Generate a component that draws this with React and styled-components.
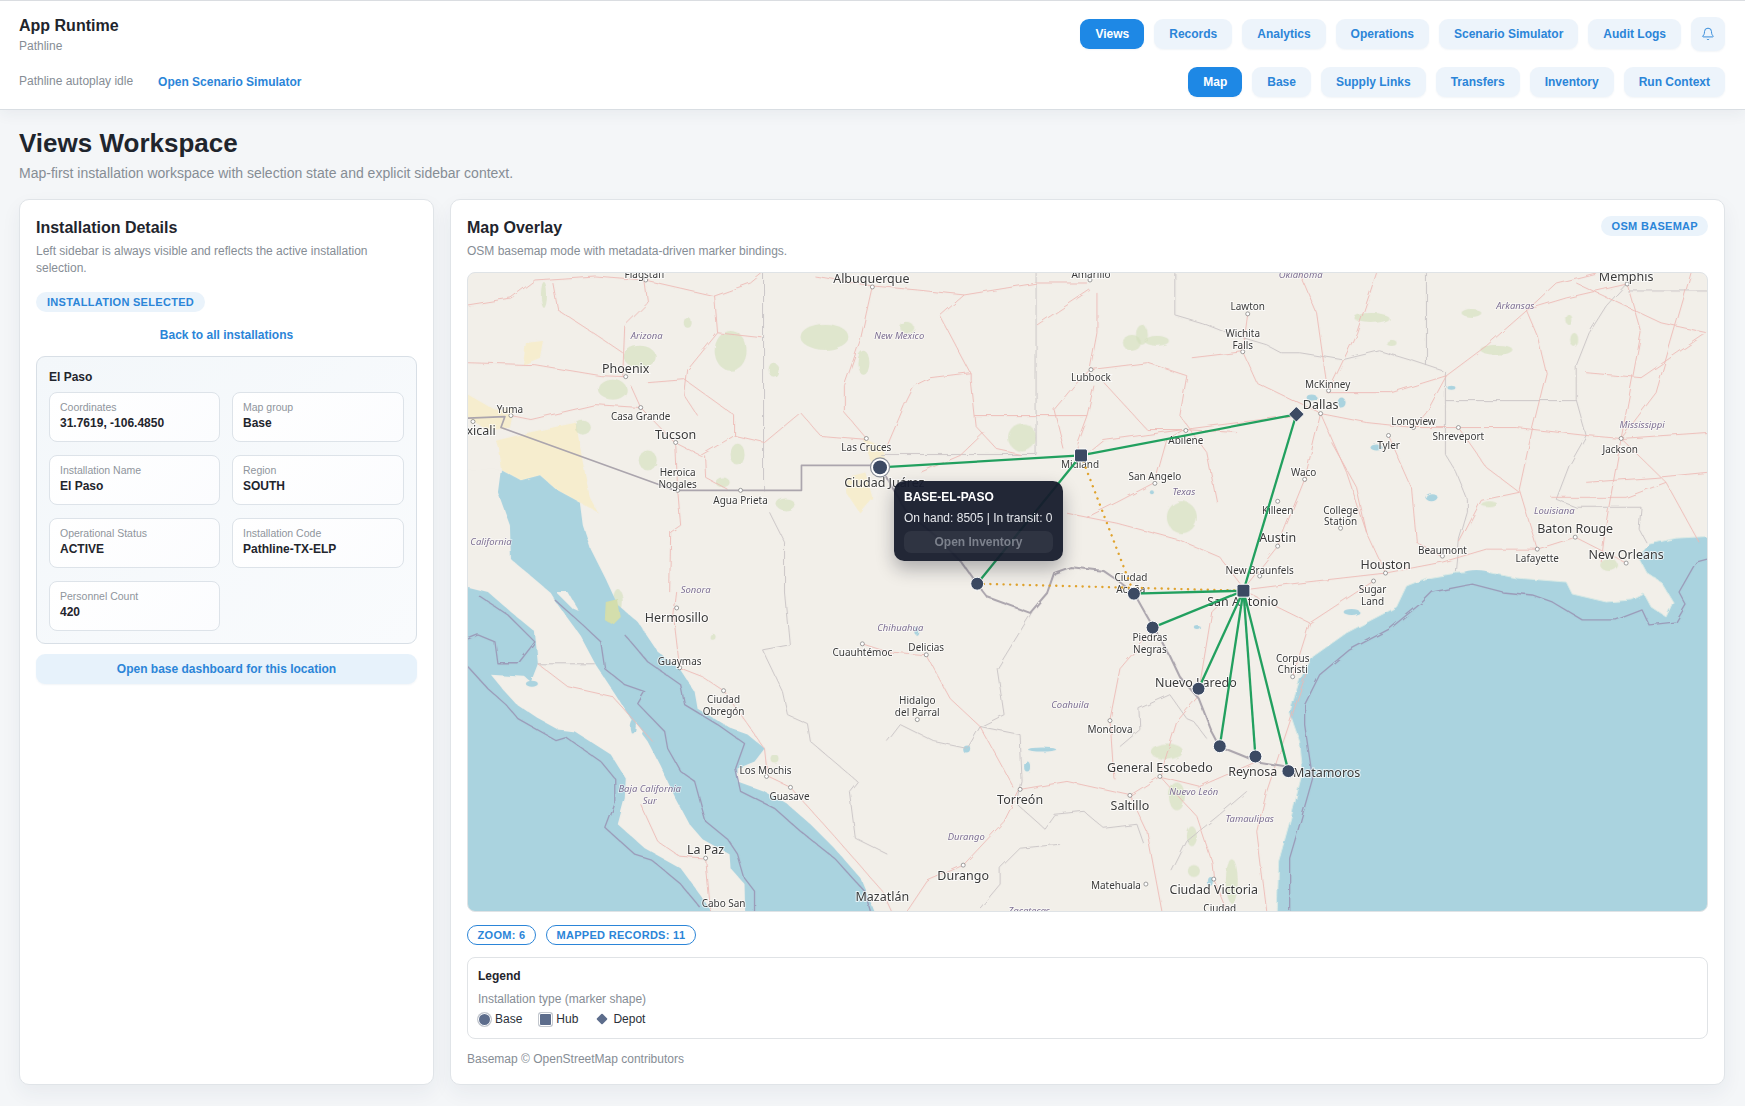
import React from "react";
import styled, { createGlobalStyle } from "styled-components";
import { Bell } from "lucide-react";

const PRIMARY_NAV = ["Views", "Records", "Analytics", "Operations", "Scenario Simulator", "Audit Logs"];
const SUB_NAV = ["Map", "Base", "Supply Links", "Transfers", "Inventory", "Run Context"];
const FIELDS = [
  ["Coordinates", "31.7619, -106.4850"],
  ["Map group", "Base"],
  ["Installation Name", "El Paso"],
  ["Region", "SOUTH"],
  ["Operational Status", "ACTIVE"],
  ["Installation Code", "Pathline-TX-ELP"],
  ["Personnel Count", "420"],
];

const WATER =
  "-20,310 33,197 53,208 72,203 88,217 112,230 115,253 123,277 138,307 150,333 170,350 190,380 212,397 227,420 230,437 263,457 280,463 297,477 287,490 270,497 270,510 297,520 320,533 343,553 367,577 393,607 407,640 415,660 -20,660";
const BAJA =
  "20,320 43,340 67,360 70,392 63,410 57,405 23,403 37,420 48,432 70,447 90,458 107,460 143,483 158,507 157,527 150,553 177,577 213,597 235,627 243,640 250,660 278,660 277,613 263,597 262,583 235,568 222,553 208,527 192,493 180,470 163,447 148,423 128,393 112,363 88,330 82,320 43,287 42,253 30,220 33,197 -20,197 -20,310";
const GULF =
  "1265,263 1210,266 1183,272 1172,285 1180,300 1195,310 1207,330 1200,345 1185,335 1178,322 1166,328 1140,330 1106,322 1100,310 1050,306 1020,300 990,301 960,306 940,314 930,335 880,361 846,385 833,408 823,441 833,470 836,500 826,540 812,590 810,660 1265,660";
const MARITIME = [
  "10,323 40,343 67,370 50,392 30,392 27,370 10,363 0,367",
  "0,395 20,417 38,433 50,447 87,468 97,465 133,490 147,507 147,533 138,557 167,583 183,588 213,613 233,637",
  "87,328 115,353 133,370 137,397 157,413 177,420 170,432 197,460 200,477 213,500 227,510 238,550 260,568 270,583 277,607 287,620 287,640",
  "157,363 180,390 213,413 217,433 250,453 277,472 268,497 273,520 307,537 333,560 367,587 397,620 403,640",
  "823,640 823,587 833,553 846,507 838,453 838,433 853,403 883,378 923,357 956,330 966,320 1006,312 1036,320 1066,323 1086,330 1116,348 1150,348 1176,338 1183,353 1210,350 1220,333 1213,320 1230,290 1241,287",
];
const SAND = [
  "28,168 60,160 108,150 115,190 122,225 130,240 112,230 88,217 72,203 53,208 33,197 30,175",
  "0,122 28,138 46,136 42,155 20,158 0,145",
  "58,70 75,68 72,85 55,92",
  "378,205 398,200 405,225 392,240 380,222",
  "395,165 415,175 420,200 404,190",
];
const PARKS = [
  [76, 22, 3, 13],
  [220, 50, 4, 5],
  [263, 78, 16, 20],
  [145, 117, 14, 10],
  [172, 84, 16, 11],
  [357, 64, 24, 13],
  [306, 97, 5, 7],
  [115, 155, 8, 7],
  [180, 188, 9, 10],
  [270, 182, 7, 11],
  [255, 210, 7, 5],
  [318, 232, 9, 6],
  [396, 90, 6, 12],
  [6, 243, 7, 18],
  [715, 245, 15, 16],
  [555, 165, 14, 14],
  [665, 70, 9, 8],
  [690, 68, 12, 5],
  [675, 62, 6, 10],
  [440, 55, 7, 5],
  [905, 45, 17, 5],
  [925, 70, 5, 3],
  [1030, 77, 16, 5],
  [1005, 40, 10, 4],
  [1108, 67, 4, 7],
  [1103, 47, 3, 5],
  [1023, 232, 8, 3],
  [1143, 293, 9, 6],
  [700, 480, 16, 8],
  [710, 525, 8, 14],
  [725, 565, 5, 10],
  [765, 610, 6, 22],
  [727, 600, 6, 6],
  [150, 330, 5, 13],
  [307, 487, 4, 4],
  [245, 365, 3, 3],
];
const LAKES = [
  [1010, 300, 12, 2],
  [845, 125, 5, 3],
  [875, 130, 4, 5],
  [910, 175, 6, 3],
  [965, 225, 6, 4],
  [985, 115, 4, 2],
  [575, 478, 14, 2],
  [500, 478, 4, 4],
  [885, 340, 8, 3],
  [730, 355, 3, 2],
  [450, 360, 2, 4],
  [560, 495, 3, 5],
  [743, 610, 3, 5],
  [685, 220, 2, 2],
  [64, 412, 6, 3],
  [165, 455, 3, 7],
];
const ROADS = [
  "0,32 43,25 67,7 127,3 177,7 247,23 283,10 295,0",
  "85,10 90,37 130,63 155,80",
  "177,7 180,30 157,53 155,103",
  "0,90 67,92 133,103 157,104",
  "163,113 173,135 207,170",
  "43,143 63,147 127,132 173,135",
  "180,110 217,107 267,143 267,163",
  "207,170 233,183 267,163 297,170 333,140 353,163 400,167",
  "208,170 210,217 213,253 203,260 202,320",
  "237,183 238,205 260,217",
  "247,23 250,60 220,97 217,123 230,143",
  "250,60 295,65",
  "405,13 393,67 377,113 377,140 400,167",
  "347,3 405,13 450,17 497,22 570,10 620,10",
  "497,22 473,43 503,100 503,107 508,153 530,177 553,182",
  "570,52 623,17",
  "630,20 630,60 623,97",
  "623,97 607,113 587,137 597,177",
  "627,113 620,143 610,170 613,183",
  "637,110 680,157 717,157 770,160",
  "623,97 680,90 720,103 713,143 740,180 750,230",
  "620,182 637,168 717,157 826,143",
  "503,100 463,105 447,113 437,133 420,173",
  "507,143 567,143 620,143",
  "517,160 493,183 453,200",
  "600,241 650,251 713,268 753,285 776,315",
  "688,210 650,230 620,245",
  "688,210 700,167 717,157",
  "854,141 838,207 811,274 776,318",
  "854,141 880,200 900,260 919,301",
  "854,141 900,150 947,155 992,155 1050,155 1120,163 1155,166 1241,160",
  "776,318 840,310 919,301",
  "919,301 976,290 1020,277 1071,277 1109,265 1160,291",
  "776,318 843,351 826,405",
  "843,351 907,309",
  "781,41 776,79 790,110 854,141",
  "776,79 725,85",
  "860,111 850,40 833,0",
  "862,118 890,60 910,0",
  "980,103 1020,73 1060,38 1090,10 1130,0",
  "1060,37 1071,63 1080,100 1066,157 1053,217 1071,277",
  "992,155 1020,195 1053,220 1015,228 993,270",
  "1161,11 1100,25 1060,37",
  "980,103 925,120 860,120",
  "980,103 960,140 947,155",
  "922,163 945,215 950,270 976,285",
  "865,170 890,215 900,260",
  "1155,166 1175,60 1161,11",
  "1155,166 1140,250 1135,290",
  "1155,166 1200,210 1233,270",
  "1155,166 1190,120 1225,0",
  "1120,100 1175,105 1241,60",
  "1120,210 1190,205 1241,200",
  "1085,225 1160,225 1200,210",
  "1110,10 1195,50 1241,60",
  "209,320 206,345 212,396 235,405 256,419 278,450 297,477 300,505 323,516 367,565 415,620 424,640",
  "173,533 190,570 212,585 238,587 243,640",
  "70,392 100,415 145,425 185,470",
  "459,383 483,427 513,455 547,517",
  "553,518 600,510 663,524 693,505 733,515 790,490",
  "553,518 537,550 496,594 460,610 440,640",
  "643,448 647,507",
  "643,448 653,397 680,365",
  "693,505 710,450 731,425 745,340 760,325",
  "663,524 680,560 695,640",
  "693,505 730,545 745,590 747,608 760,640",
  "395,372 420,380 459,383",
  "840,400 800,520 790,560 800,640",
];
const STATE_LINES = [
  "296,0 296,218",
  "569,0 569,182 413,182",
  "708,0 708,42 735,50 760,60 800,72 815,80 833,80 876,87 913,78 946,88 976,98",
  "960,0 960,93",
  "979,98 979,182 990,200 1001,227 1001,240 993,267 990,300",
  "979,128 1110,128",
  "1161,10 1140,33 1123,60 1110,93 1110,127 1120,163 1103,193 1090,227 1110,235 1175,235 1173,257 1180,270",
  "1161,18 1241,18",
  "70,392 127,392",
  "302,240 317,270 317,320 322,373 295,378 315,420 320,443 340,452 343,470 390,510 382,520 388,567 420,583",
  "420,470 433,453 467,470 500,477 513,455 553,463 555,510 550,533 577,557 587,543 617,540 637,557 670,553 677,573",
  "565,340 530,397 537,443 513,455",
  "653,475 673,458 672,437 703,423 720,447 727,450 740,467",
  "780,520 753,543 720,570 705,600",
  "593,573 553,577 533,597 533,613 513,637",
];
const LAND_BORDER = "-10,146 37,144 33,155 207,218 334,218 334,193 403,193";
const RIVER_BORDER =
  "413,195 440,240 470,265 495,291 510,312 520,325 563,341 580,321 587,301 603,295 637,299 650,308 667,321 680,344 703,384 713,405 732,427 745,460 753,475 773,483 790,490 820,495";
const CITY_DOTS = [
  [178, 7], [405, 14], [158, 104], [43, 143], [5, 149], [173, 135], [208, 170], [210, 218], [273, 218], [399, 166],
  [209, 336], [212, 396], [256, 419], [299, 505], [323, 516], [238, 587], [395, 372], [459, 383], [450, 448], [643, 449],
  [693, 505], [553, 518], [663, 524], [496, 594], [679, 613], [747, 608], [624, 97], [781, 41], [776, 79], [719, 158],
  [688, 211], [811, 229], [838, 207], [811, 274], [793, 304], [874, 256], [919, 301], [907, 309], [826, 405], [862, 118],
  [854, 141], [947, 155], [922, 163], [992, 155], [1155, 166], [1161, 11], [1109, 265], [1160, 291], [1071, 277], [976, 284],
  [623, 7],
];
const LABELS = [
  ["Flagstaff", 177, 1, "m"], ["Albuquerque", 404, 5, "l"], ["Phoenix", 158, 95, "l"], ["Yuma", 42, 136, "m"],
  ["Mexicali", 4, 158, "l"], ["Casa Grande", 173, 143, "m"], ["Tucson", 208, 162, "l"], ["Heroica", 210, 199, "m"],
  ["Nogales", 210, 211, "m"], ["Agua Prieta", 273, 227, "m"], ["Las Cruces", 399, 174, "m"], ["Ciudad Juárez", 417, 210, "l"],
  ["Hermosillo", 209, 345, "l"], ["Guaymas", 212, 389, "m"], ["Ciudad", 256, 427, "m"], ["Obregón", 256, 439, "m"],
  ["Los Mochis", 298, 498, "m"], ["Guasave", 322, 524, "m"], ["La Paz", 238, 578, "l"], ["Cabo San", 256, 631, "m"],
  ["Mazatlán", 415, 625, "l"], ["Cuauhtémoc", 395, 380, "m"], ["Delicias", 459, 375, "m"], ["Hidalgo", 450, 428, "m"],
  ["del Parral", 450, 440, "m"], ["Monclova", 643, 457, "m"], ["General Escobedo", 693, 496, "l"], ["Torreón", 553, 528, "l"],
  ["Saltillo", 663, 534, "l"], ["Durango", 496, 604, "l"], ["Matehuala", 649, 613, "m"], ["Ciudad Victoria", 747, 618, "l"],
  ["Ciudad", 753, 637, "m"], ["Reynosa", 786, 500, "l"], ["Matamoros", 860, 501, "l"], ["Nuevo Laredo", 729, 410, "l"],
  ["Piedras", 683, 365, "m"], ["Negras", 683, 377, "m"], ["Corpus", 826, 386, "m"], ["Christi", 826, 397, "m"],
  ["Sugar", 906, 317, "m"], ["Land", 906, 329, "m"], ["San Antonio", 776, 329, "l"], ["New Braunfels", 793, 297, "m"],
  ["Austin", 811, 265, "l"], ["Killeen", 811, 237, "m"], ["College", 874, 237, "m"], ["Station", 874, 248, "m"],
  ["Waco", 837, 199, "m"], ["Dallas", 854, 131, "l"], ["McKinney", 861, 111, "m"], ["San Angelo", 688, 203, "m"],
  ["Abilene", 719, 167, "m"], ["Midland", 613, 191, "m"], ["Lubbock", 624, 104, "m"], ["Wichita", 776, 60, "m"],
  ["Falls", 776, 72, "m"], ["Lawton", 781, 33, "m"], ["Amarillo", 624, 1, "m"], ["Ciudad", 664, 304, "m"],
  ["Acuña", 664, 317, "m"], ["Memphis", 1160, 3, "l"], ["Longview", 947, 148, "m"], ["Tyler", 922, 172, "m"],
  ["Shreveport", 992, 163, "m"], ["Jackson", 1154, 176, "m"], ["Baton Rouge", 1109, 256, "l"], ["New Orleans", 1160, 282, "l"],
  ["Lafayette", 1071, 285, "m"], ["Beaumont", 976, 277, "m"], ["Houston", 919, 292, "l"],
];
const REGIONS = [
  ["Arizona", 179, 62], ["New Mexico", 432, 62], ["California", 23, 269], ["Sonora", 228, 317],
  ["Baja California", 182, 517], ["Sur", 182, 529], ["Chihuahua", 433, 355], ["Coahuila", 603, 432],
  ["Nuevo León", 727, 520], ["Durango", 499, 565], ["Zacatecas", 562, 639], ["Tamaulipas", 783, 547],
  ["Texas", 717, 219], ["Oklahoma", 834, 1], ["Arkansas", 1049, 32], ["Mississippi", 1176, 151], ["Louisiana", 1088, 238],
];

const SITES = {
  elPaso: [412.7, 195],
  midland: [614, 183],
  dallas: [829.7, 141.7],
  sanAntonio: [776.7, 318.7],
  acuna: [667, 321.7],
  piedras: [685.7, 355.7],
  laredo: [731.7, 417],
  falcon: [753, 474.7],
  reynosa: [788.7, 485],
  matamoros: [821.7, 499.7],
  presidio: [510, 311.7],
};
const LINKS = [
  ["elPaso", "midland"],
  ["midland", "dallas"],
  ["midland", "presidio"],
  ["sanAntonio", "dallas"],
  ["sanAntonio", "acuna"],
  ["sanAntonio", "piedras"],
  ["sanAntonio", "laredo"],
  ["sanAntonio", "falcon"],
  ["sanAntonio", "reynosa"],
  ["sanAntonio", "matamoros"],
];
const PLANNED = [
  ["midland", "acuna"],
  ["presidio", "sanAntonio"],
];
const BASES = ["acuna", "piedras", "laredo", "falcon", "reynosa", "matamoros", "presidio"];
const HUBS = ["midland", "sanAntonio"];

const GlobalStyle = createGlobalStyle`
  html, body {
    margin: 0;
    padding: 0;
    background: #f4f6f8;
  }

  body {
    font-family: "Liberation Sans", Arial, sans-serif;
    color: #1f252d;
  }

  * {
    box-sizing: border-box;
  }
`;

const Page = styled.div`
  width: 1745px;
  height: 1106px;
  overflow: hidden;
`;

const Header = styled.header`
  display: flex;
  flex-direction: column;
  gap: 12px;
  height: 110px;
  padding: 16px 20px 0 19px;
  background: #fff;
  border-top: 1px solid #dadde1;
  border-bottom: 1px solid #d9dee3;
  box-shadow: 0 4px 14px rgba(30, 50, 80, 0.06);
  position: relative;
`;

const HeaderRow = styled.div`
  display: flex;
  justify-content: space-between;
  align-items: ${(p) => (p.$top ? "flex-start" : "center")};
`;

const Brand = styled.div`
  display: flex;
  flex-direction: column;
  gap: 3px;
  height: 38px;
`;

const AppTitle = styled.div`
  font-size: 16px;
  line-height: 18px;
  font-weight: 700;
`;

const Muted = styled.div`
  font-size: 12px;
  line-height: 16px;
  color: #868d95;
`;

const StatusLine = styled.div`
  display: flex;
  align-items: center;
  gap: 25px;
`;

const StatusText = styled(Muted)`
  margin-top: -2px;
`;

const TextLink = styled.a`
  font-size: 12px;
  font-weight: 700;
  color: #2b85d8;
  text-decoration: none;
`;

const Nav = styled.nav`
  display: flex;
  align-items: center;
  gap: 10px;
`;

const NavButton = styled.button`
  height: 30px;
  padding: 0 15px;
  border: 0;
  border-radius: 9px;
  font: 700 12px "Liberation Sans", Arial, sans-serif;
  color: ${(p) => (p.$active ? "#fff" : "#2b85d8")};
  background: ${(p) => (p.$active ? "#1e88e5" : "#edf4fb")};
  box-shadow: 0 1px 2px rgba(30, 80, 130, 0.06);
`;

const BellButton = styled(NavButton)`
  display: flex;
  align-items: center;
  justify-content: center;
  width: 34px;
  height: 34px;
  padding: 0;
`;

const Main = styled.main`
  padding: 17px 20px 0 19px;
`;

const PageTitle = styled.h1`
  margin: 0;
  font-size: 26px;
  line-height: 32px;
  font-weight: 700;
`;

const PageSub = styled.p`
  margin: 5px 0 17px;
  font-size: 14px;
  line-height: 18px;
  color: #868d95;
`;

const Columns = styled.div`
  display: grid;
  grid-template-columns: 415px 1fr;
  gap: 16px;
  height: 886px;
`;

const Card = styled.section`
  display: flex;
  flex-direction: column;
  padding: 19px 16px 0;
  background: #fff;
  border: 1px solid #e0e4e8;
  border-radius: 10px;
  box-shadow: 0 8px 20px rgba(30, 50, 80, 0.06);
  min-width: 0;
`;

const CardHead = styled.div`
  display: flex;
  justify-content: space-between;
  align-items: flex-start;
`;

const CardTitle = styled.h2`
  margin: 0;
  font-size: 16px;
  line-height: 18px;
  font-weight: 700;
`;

const CardSub = styled.p`
  margin: 6px 0 0;
  font-size: 12px;
  line-height: 17px;
  color: #868d95;
`;

const Pill = styled.span`
  display: inline-flex;
  align-items: center;
  align-self: flex-start;
  height: 20px;
  padding: 0 11px;
  border-radius: 999px;
  font-size: 11px;
  font-weight: 700;
  letter-spacing: 0.3px;
  color: #2b85d8;
  background: #eaf3fb;
`;

const BasemapPill = styled(Pill)`
  margin-top: -3px;
  padding: 0 10px 0 11px;
`;

const SelectedPill = styled(Pill)`
  margin-top: 15px;
`;

const BackLink = styled(TextLink)`
  display: block;
  margin-top: 15px;
  line-height: 16px;
  text-align: center;
`;

const DetailsPanel = styled.div`
  margin-top: 13px;
  padding: 12px 12px 12px;
  border: 1px solid #d8dfe6;
  border-radius: 9px;
  background: linear-gradient(135deg, #f3f7fa, #f9fbfd);
`;

const PanelTitle = styled.div`
  font-size: 12px;
  line-height: 16px;
  font-weight: 700;
`;

const FieldGrid = styled.div`
  display: grid;
  grid-template-columns: 171px 172px;
  gap: 13px 12px;
  margin-top: 7px;
`;

const Field = styled.div`
  height: 50px;
  padding: 7px 10px 0;
  background: linear-gradient(135deg, #fff, #fbfcfe);
  border: 1px solid #dde3e9;
  border-radius: 8px;
`;

const FieldLabel = styled.div`
  font-size: 10.5px;
  line-height: 14px;
  color: #8f959c;
`;

const FieldValue = styled.div`
  margin-top: 1px;
  font-size: 12px;
  line-height: 16px;
  font-weight: 700;
`;

const DashboardButton = styled(NavButton)`
  width: 100%;
  flex: none;
  margin-top: 10px;
  background: #e7f2fb;
`;

const MapFrame = styled.div`
  position: relative;
  height: 640px;
  margin-top: 12px;
  overflow: hidden;
  border: 1px solid #dfe3e6;
  border-radius: 8px;
  background: #f2efe9;
`;

const MapSvg = styled.svg`
  display: block;
  width: 100%;
  height: 100%;
`;

const PlaceLabel = styled.text`
  font-family: "Noto Sans", sans-serif;
  font-size: ${(p) => (p.$size === "l" ? "12.5px" : "10px")};
  fill: #3a3a3a;
  stroke: rgba(255, 255, 255, 0.7);
  stroke-width: 2px;
  paint-order: stroke;
  text-anchor: middle;
  dominant-baseline: central;
`;

const RegionLabel = styled.text`
  font-family: "Noto Sans", sans-serif;
  font-size: 9.5px;
  font-style: italic;
  fill: #7d6f92;
  stroke: rgba(255, 255, 255, 0.6);
  stroke-width: 1.5px;
  paint-order: stroke;
  text-anchor: middle;
  dominant-baseline: central;
`;

const Tooltip = styled.div`
  position: absolute;
  left: 426px;
  top: 208px;
  width: 169px;
  height: 80px;
  padding: 9px 10px;
  border-radius: 10px;
  color: #fff;
  background: rgba(22, 27, 44, 0.95);
  box-shadow: 0 8px 18px rgba(15, 20, 35, 0.3);
`;

const TooltipTitle = styled.div`
  font-size: 12px;
  line-height: 14px;
  font-weight: 700;
`;

const TooltipText = styled.div`
  margin-top: 7px;
  font-size: 12px;
  line-height: 14px;
  white-space: nowrap;
  color: #e6e8ec;
`;

const TooltipButton = styled.button`
  display: block;
  width: 149px;
  height: 22px;
  margin-top: 6px;
  padding: 0;
  border: 0;
  border-radius: 7px;
  font: 700 12px "Liberation Sans", Arial, sans-serif;
  color: #7c818c;
  background: rgba(255, 255, 255, 0.06);
`;

const ChipRow = styled.div`
  display: flex;
  gap: 10px;
  margin-top: 13px;
`;

const Chip = styled.span`
  display: inline-flex;
  align-items: center;
  height: 20px;
  padding: 0 9.5px;
  border: 1px solid #2b85d8;
  border-radius: 999px;
  font-size: 11px;
  font-weight: 700;
  letter-spacing: 0.3px;
  color: #2b85d8;
`;

const Legend = styled.div`
  height: 82px;
  margin-top: 12px;
  padding: 10px 10px 0;
  border: 1px solid #e0e3e6;
  border-radius: 8px;
`;

const LegendTitle = styled.div`
  font-size: 12px;
  line-height: 16px;
  font-weight: 700;
`;

const LegendCaption = styled(Muted)`
  margin-top: 7px;
`;

const LegendItems = styled.div`
  display: flex;
  align-items: center;
  gap: 17px;
  margin-top: 4px;
`;

const LegendItem = styled.div`
  display: flex;
  align-items: center;
  gap: 4px;
  font-size: 12px;
  line-height: 16px;
  color: #2a3038;
`;

const LegendMark = styled.span`
  display: block;
  width: ${(p) => (p.$shape === "depot" ? "8px" : "13px")};
  height: ${(p) => (p.$shape === "depot" ? "8px" : "13px")};
  margin: ${(p) => (p.$shape === "depot" ? "0 3px" : "0")};
  background: #5d6d8c;
  border-radius: ${(p) => (p.$shape === "base" ? "50%" : p.$shape === "hub" ? "2px" : "1px")};
  transform: ${(p) => (p.$shape === "depot" ? "rotate(45deg)" : "none")};
  box-shadow: ${(p) => (p.$shape === "depot" ? "none" : "inset 0 0 0 1px #fff, 0 0 0 1px #c4c8ce")};
`;

const Attribution = styled(Muted)`
  margin-top: 12px;
`;

function BaseMap() {
  return (
    <g>
      <defs>
        <filter id="roughen" filterUnits="userSpaceOnUse" x="-20" y="-20" width="1281" height="680">
          <feTurbulence type="fractalNoise" baseFrequency="0.07" numOctaves="2" seed="4" result="noise" />
          <feDisplacementMap in="SourceGraphic" in2="noise" scale="4" result="moved" />
          <feGaussianBlur in="moved" stdDeviation="0.3" />
        </filter>
      </defs>
      <g filter="url(#roughen)">
        {SAND.map((points) => (
          <polygon key={points} points={points} fill="#f6edce" />
        ))}
        {PARKS.map(([cx, cy, rx, ry]) => (
          <ellipse key={`${cx}-${cy}`} cx={cx} cy={cy} rx={rx} ry={ry} fill="#d2e0ba" opacity="0.6" />
        ))}
        <polygon points={WATER} fill="#aad3df" />
        <polygon points={GULF} fill="#aad3df" stroke="#d7e8e4" strokeWidth="1" />
        <polygon points={BAJA} fill="#f2efe9" />
        <polygon points="138,330 150,327 153,345 145,353 137,348" fill="#d4deac" />
        <polygon points="88,320 100,320 112,340 105,337" fill="#f2efe9" />
        <polygon points="168,450 175,460 173,467 168,458" fill="#f2efe9" />
        {LAKES.map(([cx, cy, rx, ry]) => (
          <ellipse key={`${cx}-${cy}`} cx={cx} cy={cy} rx={rx} ry={ry} fill="#aad3df" />
        ))}
        {STATE_LINES.map((points) => (
          <polyline key={points} points={points} fill="none" stroke="#cbc6c7" strokeWidth="1" />
        ))}
        {ROADS.map((points) => (
          <polyline key={points} points={points} fill="none" stroke="#edb9b4" strokeWidth="0.9" strokeLinejoin="round" />
        ))}
        {MARITIME.map((points) => (
          <polyline key={points} points={points} fill="none" stroke="#9b9ab8" strokeWidth="1.3" strokeLinejoin="round" />
        ))}
        <polyline points={RIVER_BORDER} fill="none" stroke="#aba5ad" strokeWidth="2" strokeLinejoin="round" />
      </g>
      <polyline points={LAND_BORDER} fill="none" stroke="#aba5ad" strokeWidth="1.7" strokeLinejoin="round" />
      {CITY_DOTS.map(([cx, cy]) => (
        <circle key={`${cx}-${cy}`} cx={cx} cy={cy} r="2" fill="#fff" stroke="#777" strokeWidth="0.7" />
      ))}
      {REGIONS.map(([name, x, y]) => (
        <RegionLabel key={name + y} x={x} y={y} dy="0.5">
          {name}
        </RegionLabel>
      ))}
      {LABELS.map(([name, x, y, size]) => (
        <PlaceLabel key={name + x} x={x} y={y} dy="0.5" $size={size}>
          {name}
        </PlaceLabel>
      ))}
    </g>
  );
}

function MapMarkers() {
  const line = ([from, to]) => {
    const [x1, y1] = SITES[from];
    const [x2, y2] = SITES[to];
    return { x1, y1, x2, y2 };
  };
  const [px, py] = SITES.elPaso;
  const [dx, dy] = SITES.dallas;
  return (
    <g>
      {PLANNED.map((link) => (
        <line key={link.join()} {...line(link)} stroke="#e0a32e" strokeWidth="2.4" strokeDasharray="0.1 6.5" strokeLinecap="round" />
      ))}
      {LINKS.map((link) => (
        <line key={link.join()} {...line(link)} stroke="#22a05f" strokeWidth="2.3" />
      ))}
      {BASES.map((id) => (
        <circle key={id} cx={SITES[id][0]} cy={SITES[id][1]} r="6.5" fill="#3c4a63" stroke="#fff" strokeWidth="1" />
      ))}
      {HUBS.map((id) => (
        <rect key={id} x={SITES[id][0] - 6.5} y={SITES[id][1] - 6.5} width="13" height="13" rx="2" fill="#3c4a63" stroke="#fff" strokeWidth="1" />
      ))}
      <rect x={dx - 5.5} y={dy - 5.5} width="11" height="11" rx="1" fill="#3c4a63" stroke="#fff" strokeWidth="0.8" transform={`rotate(45 ${dx} ${dy})`} />
      <circle cx={px} cy={py} r="9.5" fill="#fff" stroke="#8a8f98" strokeWidth="1.2" />
      <circle cx={px} cy={py} r="7" fill="#3c4a63" />
    </g>
  );
}

export default function App() {
  return (
    <Page>
      <GlobalStyle />
      <Header>
        <HeaderRow $top>
          <Brand>
            <AppTitle>App Runtime</AppTitle>
            <Muted>Pathline</Muted>
          </Brand>
          <Nav>
            {PRIMARY_NAV.map((item) => (
              <NavButton key={item} $active={item === "Views"}>
                {item}
              </NavButton>
            ))}
            <BellButton aria-label="Notifications">
              <Bell size={14} strokeWidth={1.6} />
            </BellButton>
          </Nav>
        </HeaderRow>
        <HeaderRow>
          <StatusLine>
            <StatusText>Pathline autoplay idle</StatusText>
            <TextLink>Open Scenario Simulator</TextLink>
          </StatusLine>
          <Nav>
            {SUB_NAV.map((item) => (
              <NavButton key={item} $active={item === "Map"}>
                {item}
              </NavButton>
            ))}
          </Nav>
        </HeaderRow>
      </Header>
      <Main>
        <PageTitle>Views Workspace</PageTitle>
        <PageSub>Map-first installation workspace with selection state and explicit sidebar context.</PageSub>
        <Columns>
          <Card>
            <CardTitle>Installation Details</CardTitle>
            <CardSub>Left sidebar is always visible and reflects the active installation selection.</CardSub>
            <SelectedPill>INSTALLATION SELECTED</SelectedPill>
            <BackLink>Back to all installations</BackLink>
            <DetailsPanel>
              <PanelTitle>El Paso</PanelTitle>
              <FieldGrid>
                {FIELDS.map(([label, value]) => (
                  <Field key={label}>
                    <FieldLabel>{label}</FieldLabel>
                    <FieldValue>{value}</FieldValue>
                  </Field>
                ))}
              </FieldGrid>
            </DetailsPanel>
            <DashboardButton>Open base dashboard for this location</DashboardButton>
          </Card>
          <Card>
            <CardHead>
              <div>
                <CardTitle>Map Overlay</CardTitle>
                <CardSub>OSM basemap mode with metadata-driven marker bindings.</CardSub>
              </div>
              <BasemapPill>OSM BASEMAP</BasemapPill>
            </CardHead>
            <MapFrame>
              <MapSvg viewBox="0 0 1241 640" preserveAspectRatio="none">
                <BaseMap />
                <MapMarkers />
              </MapSvg>
              <Tooltip>
                <TooltipTitle>BASE-EL-PASO</TooltipTitle>
                <TooltipText>On hand: 8505 | In transit: 0</TooltipText>
                <TooltipButton>Open Inventory</TooltipButton>
              </Tooltip>
            </MapFrame>
            <ChipRow>
              <Chip>ZOOM: 6</Chip>
              <Chip>MAPPED RECORDS: 11</Chip>
            </ChipRow>
            <Legend>
              <LegendTitle>Legend</LegendTitle>
              <LegendCaption>Installation type (marker shape)</LegendCaption>
              <LegendItems>
                <LegendItem>
                  <LegendMark $shape="base" />
                  Base
                </LegendItem>
                <LegendItem>
                  <LegendMark $shape="hub" />
                  Hub
                </LegendItem>
                <LegendItem>
                  <LegendMark $shape="depot" />
                  Depot
                </LegendItem>
              </LegendItems>
            </Legend>
            <Attribution>Basemap © OpenStreetMap contributors</Attribution>
          </Card>
        </Columns>
      </Main>
    </Page>
  );
}
